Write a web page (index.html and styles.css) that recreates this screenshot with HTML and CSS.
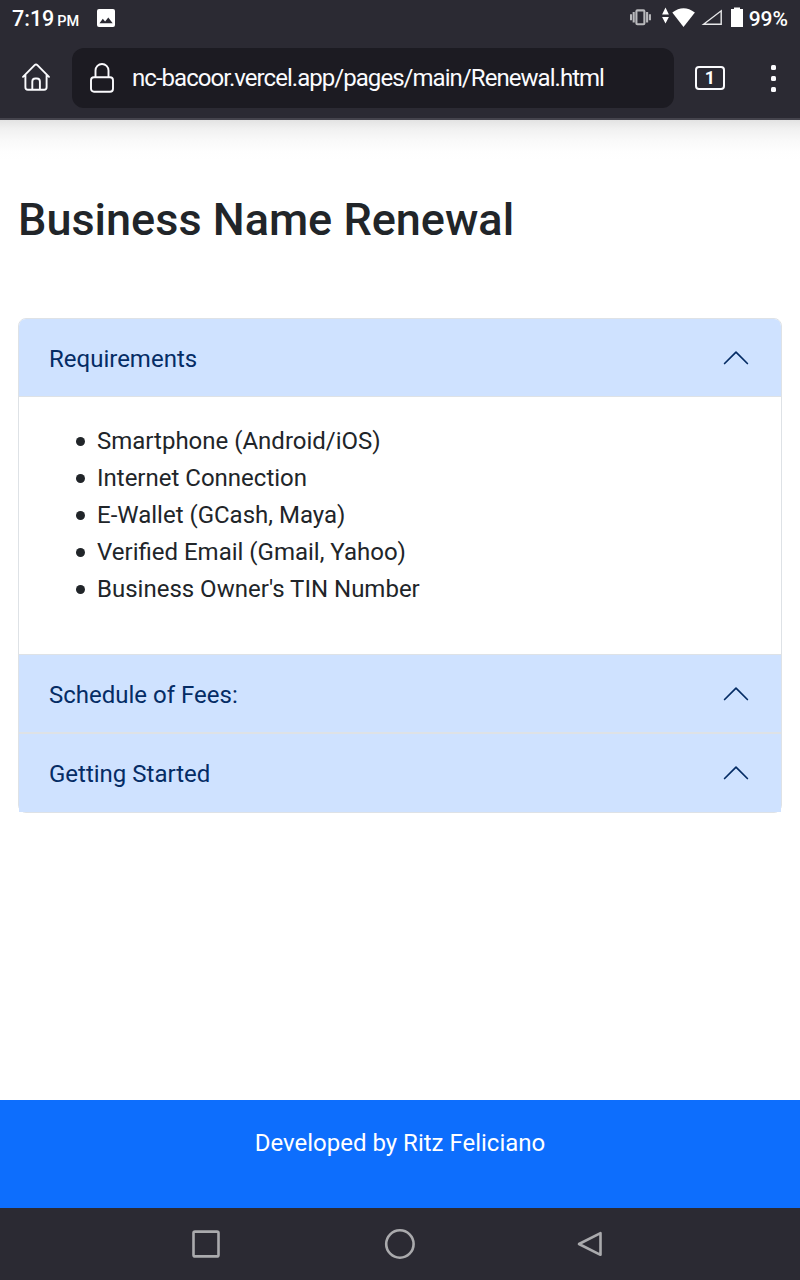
FILE: index.html
```html
<!DOCTYPE html>
<html lang="en">
<head>
<meta charset="utf-8">
<title>Business Name Renewal</title>
<link rel="stylesheet" href="styles.css">
</head>
<body>
<div class="screen">
  <header class="chrome">
    <div class="status">
      <div class="status-left">
        <span class="time">7:19</span><span class="meridiem">PM</span>
        <svg class="photo" width="18" height="18" viewBox="0 0 18 18"><rect width="18" height="18" rx="2" fill="#fff"/><path d="M2.500 14.200 5.800 9.800l2.300 2.800 3.200-4.200 4.400 5.800z" fill="#2b2a33"/></svg>
      </div>
      <svg class="indicators" width="118" height="28" viewBox="0 0 118 28">
        <g fill="none" stroke="#b9b9bc" stroke-width="2.100"><rect x="6.400" y="10.400" width="8" height="13.800" rx="1"/><path d="M3.700 12v10.500M17.100 12v10.500M1 14.300v6M19.900 14.300v6"/></g>
        <path d="M35.500 7.600 38.900 14.500h-6.800zM32.100 17h6.800l-3.400 6.500z" fill="#fff"/>
        <path d="M42.300 12.600Q53.500 3.800 64.900 12.600L53.500 27z" fill="#fff"/>
        <path d="M73.600 24.300 91.200 10.800V24.300z" fill="none" stroke="#e8e8ea" stroke-width="1.400"/>
        <path d="M101 9h3V7.500h6V9h3V27h-12z" fill="#fff"/>
      </svg>
      <span class="percent">99%</span>
    </div>
    <div class="toolbar">
      <svg class="home" width="30" height="32" viewBox="0 0 30 32" fill="none" stroke="#fbfbfe" stroke-width="1.900" stroke-linecap="round" stroke-linejoin="round"><path d="M2 14.800 13.600 3.200q1.400-1.400 2.800 0L28 14.800M4.400 13v12.300q0 2.500 2.500 2.500h16.200q2.500 0 2.500-2.500V13M11.300 27.800v-8.300q0-3 3-3h1.600q3 0 3 3v8.300"/></svg>
      <div class="address">
        <svg width="26" height="32" viewBox="0 0 26 32" fill="none" stroke="#fbfbfe" stroke-width="1.900"><rect x="2" y="15.200" width="22" height="14.600" rx="3"/><path d="M6.500 15.200V8.500a6.500 6.500 0 0 1 13 0v6.700"/></svg>
        <span class="url">nc-bacoor.vercel.app/pages/main/Renewal.html</span>
      </div>
      <span class="tabs">1</span>
      <span class="menu"><i class="dot"></i><i class="dot"></i><i class="dot"></i></span>
    </div>
  </header>
  <main class="page">
    <h1 class="title">Business Name Renewal</h1>
    <section class="accordion">
      <div class="item">
        <h2 class="item-head"><span>Requirements</span><svg class="chevron" width="30" height="30" viewBox="0 0 30 30"><path d="M3.600 20.500 15 9.200l11.400 11.300"/></svg></h2>
        <div class="item-body">
          <ul class="list">
            <li>Smartphone (Android/iOS)</li>
            <li>Internet Connection</li>
            <li>E-Wallet (GCash, Maya)</li>
            <li>Verified Email (Gmail, Yahoo)</li>
            <li>Business Owner's TIN Number</li>
          </ul>
        </div>
      </div>
      <div class="item">
        <h2 class="item-head"><span>Schedule of Fees:</span><svg class="chevron" width="30" height="30" viewBox="0 0 30 30"><path d="M3.600 20.500 15 9.200l11.400 11.300"/></svg></h2>
      </div>
      <div class="item">
        <h2 class="item-head"><span>Getting Started</span><svg class="chevron" width="30" height="30" viewBox="0 0 30 30"><path d="M3.600 20.500 15 9.200l11.400 11.300"/></svg></h2>
      </div>
    </section>
  </main>
  <footer class="footer">Developed by Ritz Feliciano</footer>
  <nav class="navbar">
    <svg width="30" height="32" viewBox="0 0 30 32"><rect x="2.500" y="3.600" width="25" height="24.800" rx="1.500"/></svg>
    <svg width="32" height="32" viewBox="0 0 32 32"><circle cx="16.900" cy="16" r="13.700"/></svg>
    <svg width="28" height="32" viewBox="0 0 28 32"><path d="M3 16 24.500 5.200v21.600z" stroke-linejoin="round"/></svg>
  </nav>
</div>
</body>
</html>
```
FILE: styles.css
```css
* { box-sizing: border-box; }
body { margin: 0; font-family: Roboto, sans-serif; background: #fff; }
svg { display: block; flex: none; }
.screen { display: flex; flex-direction: column; width: 800px; height: 1280px; overflow: hidden; }

.chrome { flex: none; height: 120px; background: #2b2a33; border-bottom: 2px solid #45444d; color: #fff; }
.status { display: flex; align-items: center; height: 36px; padding: 0 12px 0 12px; }
.status-left { display: flex; align-items: baseline; flex: 1; line-height: 36px; padding-top: 4px; }
.time { font-size: 21.500px; font-weight: 500; }
.meridiem { font-size: 14.500px; font-weight: 500; margin-left: 3px; }
.photo { margin-left: 18px; align-self: center; position: relative; top: -2px; }
.indicators { align-self: flex-start; }
.percent { margin-left: 1px; font-size: 21px; font-weight: 500; line-height: 36px; padding-top: 1px; }

.toolbar { display: flex; align-items: center; height: 60px; margin-top: 12px; padding: 0 24px 0 21px; }
.address { display: flex; align-items: center; gap: 17px; width: 602px; height: 60px; margin-left: 21px; padding-left: 17px; border-radius: 12px; background: #1c1b22; }
.url { font-size: 24px; letter-spacing: -0.960px; color: #fbfbfe; white-space: nowrap; }
.tabs { width: 30px; height: 24px; margin-left: 21px; border: 2px solid #fbfbfe; border-radius: 4px; font-size: 18px; font-weight: 700; line-height: 20px; text-align: center; }
.menu { display: flex; flex-direction: column; gap: 6px; margin-left: auto; }
.dot { width: 5px; height: 5px; border-radius: 1.500px; background: #fbfbfe; }

.page { flex: 1; padding: 73px 18px 0; background: linear-gradient(#e3e3e3 0, #f1f1f1 9px, #f9f9f9 20px, #fefefe 32px, #fff 40px); }
.title { margin: 0 0 71px; font-size: 45px; font-weight: 500; line-height: 54px; color: #212529; white-space: nowrap; }
.accordion { border: 1px solid #dee2e6; border-radius: 8px; color: #212529; }
.item + .item { border-top: 1px solid #dee2e6; }
.item-head { display: flex; align-items: center; justify-content: space-between; height: 78px; margin: 0; padding: 0 30px; background: #cfe2ff; box-shadow: inset 0 -1px 0 #dee2e6; color: #052c65; font-size: 24px; font-weight: 400; }
.item-head span { padding-top: 2px; }
.item:first-child .item-head { border-radius: 7px 7px 0 0; }
.item:last-child .item-head { box-shadow: none; }
.chevron { fill: none; stroke: #052c65; stroke-width: 1.700; stroke-linecap: round; stroke-linejoin: round; }
.item-body { height: 257px; padding: 26px 30px 24px; }
.list { margin: 0; padding-left: 27px; font-size: 24px; line-height: 37px; list-style: none; }
.list li { display: flex; align-items: center; gap: 12px; }
.list li::before { content: ""; width: 9px; height: 9px; border-radius: 50%; background: #212529; }

.footer { flex: none; height: 108px; padding-top: 25px; background: #0d6efd; color: #fff; font-size: 24px; line-height: 37px; text-align: center; }
.navbar { flex: none; display: flex; align-items: center; justify-content: space-between; height: 72px; padding: 0 196px 0 191px; background: #2b2a33; }
.navbar svg { fill: none; stroke: #aaaaad; stroke-width: 2.600; }
```
